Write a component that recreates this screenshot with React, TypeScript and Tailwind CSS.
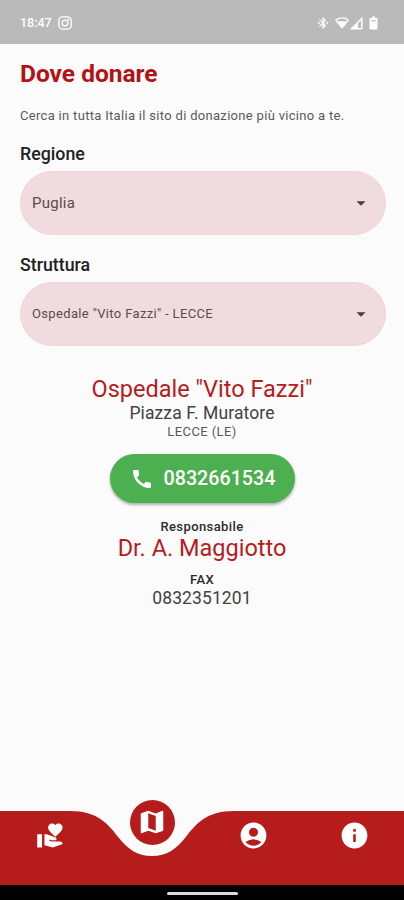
import type { ReactNode } from "react";
import {
  MdAccountCircle,
  MdArrowDropDown,
  MdBluetoothConnected,
  MdCall,
  MdInfo,
  MdMap,
  MdVolunteerActivism,
} from "react-icons/md";

type SelectFieldProps = {
  label: string;
  value: string;
  valueClassName: string;
};

function StatusBar() {
  return (
    <header className="flex h-11 shrink-0 items-center justify-between bg-[#bababa] pr-[26px] pl-5 pt-[2px] text-white">
      <div className="flex items-center gap-[6px]">
        <span className="text-[12.5px] font-medium">18:47</span>
        <svg viewBox="0 0 14 14" className="size-[14px]" fill="none" stroke="currentColor" strokeWidth="1.3">
          <rect x="0.8" y="0.8" width="12.4" height="12.4" rx="3.8" />
          <circle cx="7" cy="7" r="2.9" />
          <circle cx="10.4" cy="3.6" r="0.4" />
        </svg>
      </div>
      <div className="flex items-center">
        <MdBluetoothConnected className="mr-[5px] size-[14px]" />
        <svg viewBox="0 0 14 12" className="mr-px h-3 w-[14px]" fill="none" stroke="currentColor">
          <path d="M0.7 3.2C4.2 0.2 9.8 0.2 13.3 3.2L7 10.8Z" strokeWidth="1.3" strokeLinejoin="round" />
          <path d="M2.2 4.2H11.8L7 10.4Z" fill="currentColor" stroke="none" />
        </svg>
        <svg viewBox="0 0 13 13" className="mr-[6px] size-[13px]">
          <path d="M11.8 1.4V11.8H1.4Z" fill="none" stroke="currentColor" strokeWidth="1.4" />
          <path d="M8 5.4V12H1.6Z" fill="currentColor" />
        </svg>
        <svg viewBox="0 0 9 14" className="h-[14px] w-[9px]">
          <path
            d="M3 0.5H6V2H7.5Q8.5 2 8.5 3V12.5Q8.5 13.5 7.5 13.5H1.5Q0.5 13.5 0.5 12.5V3Q0.5 2 1.5 2H3Z"
            fill="currentColor"
          />
          <path d="M2.4 4H6.6V5.2H2.4Z" fill="#bababa" />
        </svg>
      </div>
    </header>
  );
}

function SelectField({ label, value, valueClassName }: SelectFieldProps) {
  return (
    <div>
      <h2 className="text-[17.8px] leading-5 font-medium text-[#212121]">{label}</h2>
      <button
        type="button"
        className="mt-[7px] flex h-16 w-[366px] items-center justify-between rounded-full border border-[#f5d3da] bg-[#f0dcdf] pr-[13px] pl-[11px] text-[#5c4a4d]"
      >
        <span className={valueClassName}>{value}</span>
        <MdArrowDropDown className="size-[22px] text-[#414141]" />
      </button>
    </div>
  );
}

function NavItem({ children }: { children: ReactNode }) {
  return <button type="button" className="flex h-12 items-center justify-center">{children}</button>;
}

function BottomNav() {
  return (
    <nav className="relative h-[74px] shrink-0 text-white">
      <svg viewBox="0 0 404 74" className="absolute inset-0 h-[74px] w-[404px]">
        <path
          d="M0 0H70C98 0 108 13 119 27C128 38 137 45 152 45C167 45 176 38 185 27C196 13 206 0 234 0H404V74H0Z"
          fill="#b71c1c"
        />
      </svg>
      <div className="relative grid w-[405px] grid-cols-4">
        <NavItem>
          <MdVolunteerActivism className="size-[29px]" />
        </NavItem>
        <NavItem>
          <span className="relative -top-[13px] left-[0.5px] flex size-[45px] items-center justify-center rounded-full bg-[#b71c1c]">
            <MdMap className="size-[30px]" />
          </span>
        </NavItem>
        <NavItem>
          <MdAccountCircle className="size-[31px]" />
        </NavItem>
        <NavItem>
          <MdInfo className="size-[31px]" />
        </NavItem>
      </div>
    </nav>
  );
}

export default function App() {
  return (
    <div className="flex h-[900px] w-[404px] flex-col overflow-hidden bg-[#fbfbfb] font-[Roboto,sans-serif]">
      <StatusBar />

      <main className="flex-1 px-5 pt-[14px]">
        <h1 className="text-[24.5px] leading-8 font-bold text-[#b31217]">Dove donare</h1>
        <p className="mt-[17px] text-[13px] leading-[18px] tracking-[0.31px] whitespace-nowrap text-[#5a5a5a]">
          Cerca in tutta Italia il sito di donazione più vicino a te.
        </p>

        <div className="mt-[19px] space-y-[20px]">
          <SelectField label="Regione" value="Puglia" valueClassName="text-[15px] tracking-[0.25px]" />
          <SelectField
            label="Struttura"
            value={'Ospedale "Vito Fazzi" - LECCE'}
            valueClassName="text-[13px] tracking-[0.35px]"
          />
        </div>

        <section className="mt-[29px] flex flex-col items-center text-[#424242]">
          <h3 className="text-[23.5px] leading-7 text-[#b71c1c]">Ospedale "Vito Fazzi"</h3>
          <p className="text-[17.5px] leading-[21px] tracking-[0.1px]">Piazza F. Muratore</p>
          <p className="-mt-px text-[13px] leading-[18px] tracking-[0.4px] text-[#5a5a5a]">LECCE (LE)</p>
          <button
            type="button"
            className="mt-[13px] flex h-[49px] w-[185px] items-center rounded-full bg-[#4caf50] pl-[20px] text-white shadow-[0_2px_3px_rgba(0,0,0,0.3)]"
          >
            <MdCall className="size-[24px]" />
            <span className="ml-[10px] pt-px text-[19.7px] font-medium">0832661534</span>
          </button>
          <p className="mt-[15px] text-[13px] leading-[18px] font-medium tracking-[0.4px] text-[#2b2b2b]">
            Responsabile
          </p>
          <p className="-mt-px text-[23.5px] leading-[26px] text-[#b71c1c]">Dr. A. Maggiotto</p>
          <p className="mt-[10px] text-[13px] leading-[18px] font-medium tracking-[0.4px] text-[#2b2b2b]">FAX</p>
          <p className="-mt-px text-[17.5px] leading-5 tracking-[0.1px]">0832351201</p>
        </section>
      </main>

      <BottomNav />
      <div className="flex h-[15px] shrink-0 items-center justify-center bg-black pt-px">
        <div className="h-[3px] w-[71px] rounded-full bg-[#dcdcdc]" />
      </div>
    </div>
  );
}
